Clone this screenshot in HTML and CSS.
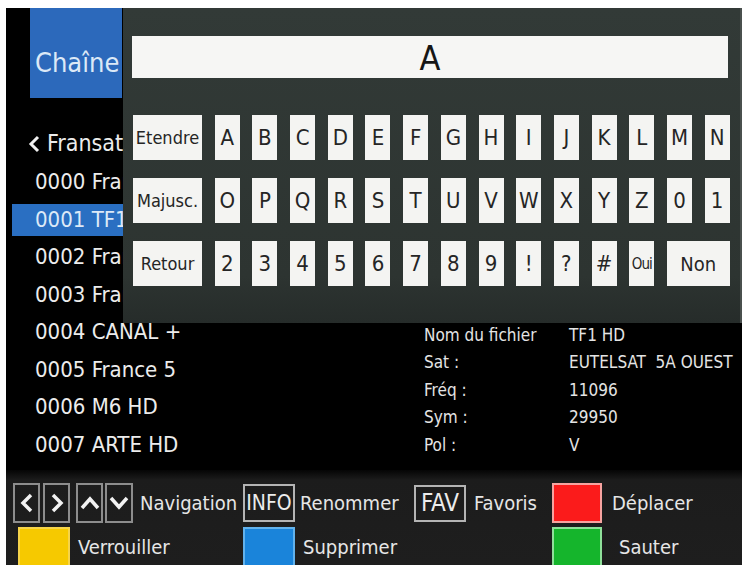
FILE: index.html
```html
<!DOCTYPE html>
<html lang="fr">
  <head>
    <meta charset="UTF-8" />
    <meta name="viewport" content="width=device-width, initial-scale=1.0" />
    <title>Chaîne</title>
    <link rel="stylesheet" href="styles.css">
  </head>
  <body>
    <div class="screen">
      <div class="main">
        <div class="list">
          <div class="list__title">Chaîne</div>
          <div class="list__sat">
            <svg class="list__back" width="13" height="18" viewBox="0 0 13 18"><polyline points="10,2 3,9 10,16" /></svg>
            Fransat
          </div>
          <div class="list__row list__row--under">0000 France 2 HD</div>
          <div class="list__row list__row--under active">0001 TF1 HD</div>
          <div class="list__row list__row--under">0002 France 3</div>
          <div class="list__row list__row--under">0003 France 4</div>
          <div class="list__row">0004 CANAL +</div>
          <div class="list__row">0005 France 5</div>
          <div class="list__row">0006 M6 HD</div>
          <div class="list__row">0007 ARTE HD</div>
        </div>

        <div class="info">
          <span>Nom du fichier</span><span>TF1 HD</span>
          <span>Sat :</span><span>EUTELSAT&nbsp; 5A OUEST</span>
          <span>Fréq :</span><span>11096</span>
          <span>Sym :</span><span>29950</span>
          <span>Pol :</span><span>V</span>
        </div>

        <div class="keyboard">
          <div class="keyboard__input">A</div>
          <div class="keyboard__keys">
            <span class="key key--wide">Etendre</span>
            <span class="key">A</span><span class="key">B</span><span class="key">C</span><span class="key">D</span>
            <span class="key">E</span><span class="key">F</span><span class="key">G</span><span class="key">H</span>
            <span class="key">I</span><span class="key">J</span><span class="key">K</span><span class="key">L</span>
            <span class="key">M</span><span class="key">N</span>

            <span class="key key--wide">Majusc.</span>
            <span class="key">O</span><span class="key">P</span><span class="key">Q</span><span class="key">R</span>
            <span class="key">S</span><span class="key">T</span><span class="key">U</span><span class="key">V</span>
            <span class="key">W</span><span class="key">X</span><span class="key">Y</span><span class="key">Z</span>
            <span class="key">0</span><span class="key">1</span>

            <span class="key key--wide">Retour</span>
            <span class="key">2</span><span class="key">3</span><span class="key">4</span><span class="key">5</span>
            <span class="key">6</span><span class="key">7</span><span class="key">8</span><span class="key">9</span>
            <span class="key">!</span><span class="key">?</span><span class="key">#</span>
            <span class="key key--small">Oui</span>
            <span class="key key--span">Non</span>
          </div>
        </div>
      </div>

      <div class="bar">
        <div class="bar__cell">
          <span class="btn btn--arrow">
            <svg width="14" height="20" viewBox="0 0 14 20"><polyline points="11,2 3,10 11,18" /></svg>
          </span>
          <span class="btn btn--arrow btn--next">
            <svg width="14" height="20" viewBox="0 0 14 20"><polyline points="3,2 11,10 3,18" /></svg>
          </span>
          <span class="btn btn--arrow btn--up">
            <svg width="20" height="14" viewBox="0 0 20 14"><polyline points="2,12 10,3 18,12" /></svg>
          </span>
          <span class="btn btn--arrow btn--down">
            <svg width="20" height="14" viewBox="0 0 20 14"><polyline points="2,2 10,11 18,2" /></svg>
          </span>
          <span class="bar__label bar__label--nav">Navigation</span>
        </div>
        <div class="bar__cell">
          <span class="btn btn--text">INFO</span>
          <span class="bar__label bar__label--tight">Renommer</span>
        </div>
        <div class="bar__cell">
          <span class="btn btn--text btn--fav">FAV</span>
          <span class="bar__label">Favoris</span>
        </div>
        <div class="bar__cell">
          <span class="swatch swatch--red"></span>
          <span class="bar__label bar__label--far">Déplacer</span>
        </div>

        <div class="bar__cell">
          <span class="swatch swatch--yellow"></span>
          <span class="bar__label">Verrouiller</span>
        </div>
        <div class="bar__cell">
          <span class="swatch swatch--blue"></span>
          <span class="bar__label">Supprimer</span>
        </div>
        <div class="bar__cell"></div>
        <div class="bar__cell">
          <span class="swatch swatch--green"></span>
          <span class="bar__label bar__label--farther">Sauter</span>
        </div>
      </div>
    </div>
  </body>
</html>
```

FILE: styles.css
```css
* {
  box-sizing: border-box;
}

body {
  margin: 8px 0 0 6px;
  background-color: #fff;
  font-family: "DejaVu Sans Condensed", "DejaVu Sans", sans-serif;
  overflow: hidden;
}

.screen {
  width: 736px;
  height: 557px;
  background-color: #000;
  color: #ececec;
  overflow: hidden;
}

.main {
  position: relative;
  display: flex;
  height: 462px;
}

/* channel list */
.list {
  width: 412px;
  flex-shrink: 0;
}

.list__title {
  margin-left: 24px;
  width: 92px;
  height: 90px;
  padding: 41px 0 0 5px;
  background-color: #2c69bb;
  color: #dce9f7;
  font-size: 27px;
  line-height: 27px;
}

.list__sat {
  display: flex;
  align-items: center;
  margin: 25px 0 3px 22px;
  height: 40px;
  font-size: 23px;
  line-height: 40px;
}

.list__back {
  margin-right: 6px;
  margin-top: 2px;
}

.list__back polyline {
  fill: none;
  stroke: #f0f0f0;
  stroke-width: 3;
}

.list__row {
  height: 32px;
  margin: 0 0 5.5px 6px;
  padding-left: 23px;
  font-size: 22px;
  line-height: 32px;
  white-space: nowrap;
}

/* rows that run under the keyboard are cut at its edge */
.list__row--under {
  width: 111px;
  overflow: hidden;
}

.list__row.active {
  background-color: #2a6fc2;
  color: #dce9f7;
}

/* channel details */
.info {
  display: grid;
  grid-template-columns: 145px auto;
  grid-auto-rows: 27.5px;
  align-items: center;
  align-content: start;
  padding: 313px 0 0 6px;
  font-size: 17px;
  color: #e4e4e4;
  white-space: nowrap;
}

/* on-screen keyboard, drawn over the list */
.keyboard {
  position: absolute;
  top: 0;
  left: 117px;
  right: 0;
  height: 315px;
  padding: 28px 12px 0 9px;
  background: linear-gradient(#323a37, #2d3431 85%, #262c2a);
  border-right: 2px solid #4a504e;
}

.keyboard__input {
  height: 42px;
  background-color: #f6f6f4;
  color: #161616;
  font-size: 34px;
  line-height: 44px;
  text-align: center;
}

.keyboard__keys {
  display: grid;
  grid-template-columns: 69px repeat(14, 25px);
  grid-auto-rows: 45px;
  column-gap: 12.7px;
  row-gap: 18px;
  margin: 37px 0 0 1px;
}

.key {
  display: flex;
  align-items: center;
  justify-content: center;
  background-color: #f4f4f2;
  color: #252525;
  font-size: 22px;
}

.key--wide {
  font-size: 18px;
}

.key--small {
  font-size: 15px;
  letter-spacing: -1px;
}

.key--span {
  grid-column: span 2;
  font-size: 20px;
}

/* legend bar */
.bar {
  display: grid;
  grid-template-columns: 230px 171px 138px auto;
  grid-template-rows: 40px 40px;
  row-gap: 4px;
  height: 95px;
  padding: 13px 0 0 7px;
  background: linear-gradient(#050505, #1c1c1c 10px, #1e1e1e);
}

.bar__cell {
  display: flex;
  align-items: center;
}

.bar__label {
  margin-left: 8px;
  font-size: 20px;
  color: #e6e6e6;
  white-space: nowrap;
}

.bar__label--nav {
  margin-left: 7px;
}

.bar__label--tight {
  margin-left: 5px;
}

.bar__label--far {
  margin-left: 10px;
}

.bar__label--farther {
  margin-left: 17px;
}

.btn {
  display: flex;
  align-items: center;
  justify-content: center;
  height: 40px;
  border: 2px solid #8d8d8d;
  color: #ececec;
}

.btn--arrow {
  width: 27px;
}

.btn--next {
  margin-left: 3px;
}

.btn--up {
  margin-left: 6px;
}

.btn--down {
  width: 28px;
  margin-left: 2px;
}

.btn polyline {
  fill: none;
  stroke: #f2f2f2;
  stroke-width: 3.5;
}

.btn--text {
  width: 52px;
  height: 38px;
  border-color: #b4b4b4;
  font-size: 21px;
}

.btn--fav {
  height: 37px;
  font-size: 24px;
}

.swatch {
  width: 50px;
  height: 40px;
  border: 2px solid;
}

.swatch--red {
  background-color: #fb1b1b;
  border-color: #f7a3a0;
}

.swatch--yellow {
  margin-left: 5px;
  width: 52px;
  background-color: #f6c900;
  border-color: #f6d44a;
}

.swatch--blue {
  width: 52px;
  background-color: #1a84da;
  border-color: #62b2ec;
}

.swatch--green {
  background-color: #15b52c;
  border-color: #8fe09a;
}
```
